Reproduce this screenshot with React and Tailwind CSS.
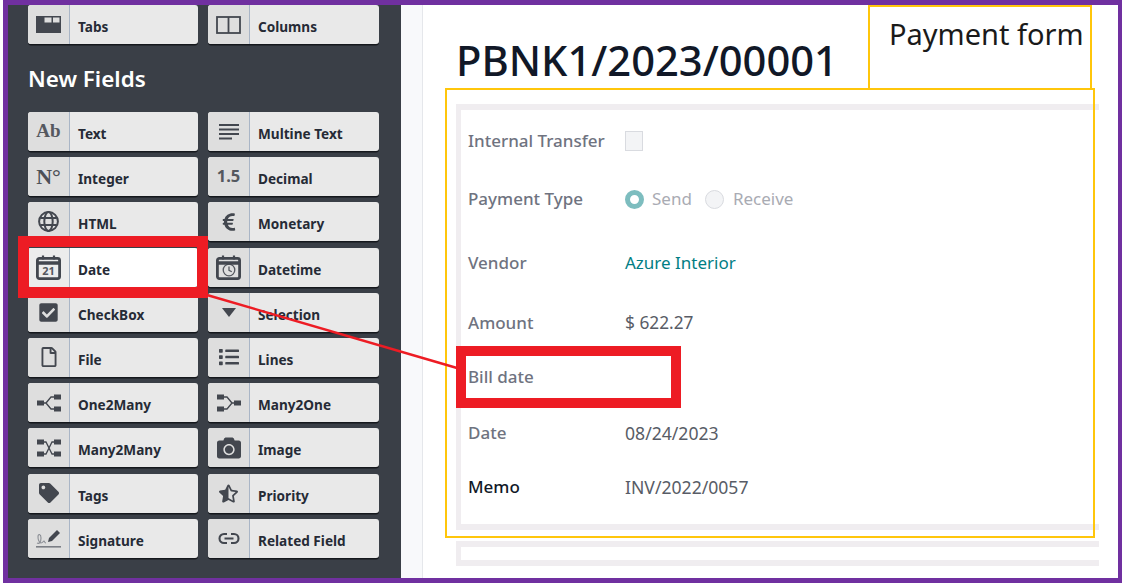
import { FaCamera, FaCheckSquare, FaEuroSign, FaList, FaRegFile, FaStarHalfAlt, FaTag } from 'react-icons/fa'

const ink = '#43474f'

const Tabs = () => (
  <svg width="25" height="17" viewBox="0 0 25 17">
    <rect width="25" height="17" fill={ink} />
    <rect x="8.5" y="1.5" width="7" height="5" fill="#dedede" />
    <rect x="17" y="1.5" width="6.5" height="5" fill="#dedede" />
  </svg>
)

const Columns = () => (
  <svg width="25" height="18" viewBox="0 0 25 18" fill="none" stroke={ink} strokeWidth="1.8">
    <rect x="1" y="1" width="23" height="16" />
    <path d="M12.5 1v16" />
  </svg>
)

const Multiline = () => (
  <svg width="20" height="16" viewBox="0 0 20 16" fill={ink}>
    <rect width="20" height="2" />
    <rect y="4.5" width="20" height="2" />
    <rect y="9" width="20" height="2" />
    <rect y="13.5" width="13" height="2" />
  </svg>
)

const Globe = () => (
  <svg width="21" height="21" viewBox="0 0 21 21" fill="none" stroke={ink} strokeWidth="2">
    <circle cx="10.5" cy="10.5" r="9.4" />
    <ellipse cx="10.5" cy="10.5" rx="4.2" ry="9.4" />
    <path d="M2.2 7h16.6M2.2 14h16.6" />
  </svg>
)

const Calendar = ({ children }) => (
  <div className="relative flex h-[25px] w-[25px] items-center justify-center">
    <svg className="absolute inset-0" width="25" height="25" viewBox="0 0 25 25" fill="none">
      <rect x="1.4" y="3.4" width="22.2" height="20.2" rx="2" stroke={ink} strokeWidth="2.8" />
      <path d="M1 8h23" stroke={ink} strokeWidth="3.4" />
      <path d="M7 0.5v4M18 0.5v4" stroke={ink} strokeWidth="2.2" />
    </svg>
    {children}
  </div>
)

const Clock = () => (
  <svg className="mt-[6px]" width="14" height="14" viewBox="0 0 15 15" fill="none" stroke="#55585f" strokeWidth="1.4">
    <circle cx="7.5" cy="7.5" r="6.2" />
    <path d="M7.5 3.8v4l3 1.6" />
  </svg>
)

const Caret = () => (
  <svg width="14" height="9" viewBox="0 0 14 9" fill={ink}>
    <path d="M0 0h14L7 9z" />
  </svg>
)

const One2Many = () => (
  <svg width="24" height="18" viewBox="0 0 24 18">
    <path d="M6 9h3l5-6h3M9 9l5 6h3" fill="none" stroke={ink} strokeWidth="1.3" />
    <g fill={ink}>
      <rect y="6.5" width="7" height="5" />
      <rect x="17" y="0.5" width="7" height="5" />
      <rect x="17" y="12.5" width="7" height="5" />
    </g>
  </svg>
)

const Many2One = () => (
  <svg width="24" height="18" viewBox="0 0 24 18">
    <path d="M18 9h-3l-5-6H7M15 9l-5 6H7" fill="none" stroke={ink} strokeWidth="1.3" />
    <g fill={ink}>
      <rect x="17" y="6.5" width="7" height="5" />
      <rect y="0.5" width="7" height="5" />
      <rect y="12.5" width="7" height="5" />
    </g>
  </svg>
)

const Many2Many = () => (
  <svg width="24" height="18" viewBox="0 0 24 18">
    <path d="M6 3h3l6 12h3M6 15h3l6-12h3" fill="none" stroke={ink} strokeWidth="1.3" />
    <g fill={ink}>
      <rect y="0.5" width="7" height="5" />
      <rect y="12.5" width="7" height="5" />
      <rect x="17" y="0.5" width="7" height="5" />
      <rect x="17" y="12.5" width="7" height="5" />
    </g>
  </svg>
)

const Signature = () => (
  <svg width="25" height="19" viewBox="0 0 25 19" fill="none">
    <path d="M1 14c2 1 4 0 4-5 0-4-3-5-3-1 0 3 1 5 3 6 2 0 2-2 3-2s0 2 2 2" stroke="#8b8e95" strokeWidth="1.1" />
    <path d="M12 13l1-4 8-8 3 3-8 8z" fill={ink} />
    <rect y="17" width="25" height="1.6" fill="#7b7e85" />
  </svg>
)

const Link = () => (
  <svg width="22" height="13" viewBox="0 0 22 13" fill="none" stroke={ink} strokeWidth="2.1">
    <path d="M9 2H6a4.5 4.5 0 0 0 0 9h3M13 2h3a4.5 4.5 0 0 1 0 9h-3M6.5 6.5h9" />
  </svg>
)

const fields = [
  ['Text', <span className='font-["Liberation_Serif",serif] text-[19px] font-bold text-[#55585f]'>Ab</span>],
  ['Multine Text', <Multiline />],
  ['Integer', <span className='font-["Liberation_Serif",serif] text-[22px] font-bold text-[#4d5057]'>N°</span>],
  ['Decimal', <span className='font-["Noto_Sans",sans-serif] text-[16.5px] font-bold text-[#55585f]'>1.5</span>],
  ['HTML', <Globe />],
  ['Monetary', <FaEuroSign size={20} color={ink} />],
  ['Date', <Calendar><span className='mt-[6px] font-["Noto_Sans",sans-serif] text-[11px] font-bold leading-none text-[#55585f]'>21</span></Calendar>],
  ['Datetime', <Calendar><Clock /></Calendar>],
  ['CheckBox', <FaCheckSquare size={21} color={ink} />],
  ['Selection', <Caret />],
  ['File', <FaRegFile size={20} color={ink} />],
  ['Lines', <FaList size={20} color={ink} />],
  ['One2Many', <One2Many />],
  ['Many2One', <Many2One />],
  ['Many2Many', <Many2Many />],
  ['Image', <FaCamera size={24} color={ink} />],
  ['Tags', <FaTag size={20} color={ink} />],
  ['Priority', <FaStarHalfAlt size={19} color={ink} />],
  ['Signature', <Signature />],
  ['Related Field', <Link />],
]

function FieldButton({ label, icon, active }) {
  return (
    <div className={`flex h-[39px] overflow-hidden rounded-[3px] shadow-[0_1.5px_0_#15181d] ${active ? 'bg-white' : 'bg-[#e9e9e9]'}`}>
      <div className={`flex w-[42px] shrink-0 items-center justify-center border-r border-[#a9b5c6] ${active ? 'bg-[#ececec]' : 'bg-[#dedede]'}`}>
        {icon}
      </div>
      <span className="pl-[8px] pt-[12px] text-[13.6px] font-bold leading-[20px] text-[#262b36]">{label}</span>
    </div>
  )
}

const rows = [
  { label: 'Internal Transfer', height: 'h-[60px]', value: <div className="h-[20px] w-[18px] border border-[#d9dbe0] bg-[#f3f4f6]" /> },
  {
    label: 'Payment Type',
    height: 'h-[56px]',
    value: (
      <div className="flex items-center text-[#a9abb3]">
        <span className="h-[19px] w-[19px] rounded-full border-[5px] border-[#7dbdbf] bg-white" />
        <span className="ml-[8px]">Send</span>
        <span className="ml-[13px] h-[19px] w-[19px] rounded-full border border-[#d9dbe0] bg-[#f3f4f6]" />
        <span className="ml-[9px]">Receive</span>
      </div>
    ),
  },
  { label: 'Vendor', height: 'h-[72px]', value: <span className="text-[#017e84]">Azure Interior</span> },
  { label: 'Amount', height: 'h-[48px]', value: <span className="text-[17.3px] text-[#585c66]">$ 622.27</span> },
  { label: 'Bill date', height: 'h-[60px]', value: null },
  { label: 'Date', height: 'h-[52px]', value: <span className="text-[17.6px] text-[#585c66]">08/24/2023</span> },
  { label: 'Memo', height: 'h-[56px]', value: <span className="text-[17.6px] text-[#585c66]">INV/2022/0057</span>, strong: true },
]

export default function App() {
  return (
    <div className='relative h-[583px] w-[1122px] overflow-hidden bg-white pl-[3px] font-["Noto_Sans",sans-serif]'>
      <div className="flex h-full border-y-[5px] border-l-[5px] border-r-[4px] border-[#7030a0]">
        <aside className="w-[393px] shrink-0 bg-[#3a3f47] pl-[20px]">
          <div className="grid w-[351px] grid-cols-[170px_171px] gap-x-[10px]">
            <FieldButton label="Tabs" icon={<Tabs />} />
            <FieldButton label="Columns" icon={<Columns />} />
          </div>
          <h2 className="mb-[17px] mt-[19px] h-[32px] text-[22.4px] font-semibold leading-[32px] text-white">New Fields</h2>
          <div className="grid w-[351px] grid-cols-[170px_171px] gap-x-[10px] gap-y-[6.2px]">
            {fields.map(([label, icon]) => (
              <FieldButton key={label} label={label} icon={icon} active={label === 'Date'} />
            ))}
          </div>
        </aside>

        <div className="w-[22px] shrink-0 border-r border-[#e5e7eb] bg-[#f8f9fb]" />

        <main className="min-w-0 flex-1 pl-[33px]">
          <div className="flex h-[99px]">
            <h1 className="mt-[30px] h-[50px] w-[433px] shrink-0 whitespace-nowrap text-[41.7px] font-medium leading-[50px] text-[#111827]">PBNK1/2023/00001</h1>
            <div className="mt-[9px] whitespace-nowrap text-[29px] leading-[40px] text-[#1a1a1a]">Payment form</div>
          </div>

          <section className="h-[426px] w-[643px] border-y-[6px] border-l-[5px] border-[#f0edf0] pl-[7px] pt-[1px] text-[17px] leading-[24px]">
            {rows.map((row) => (
              <div key={row.label} className={`flex items-center ${row.height}`}>
                <div className={`w-[157px] shrink-0 font-medium ${row.strong ? 'text-[#111827]' : 'text-[#6f7380]'}`}>{row.label}</div>
                {row.value}
              </div>
            ))}
          </section>

          <div className="mt-[11px] h-[25px] w-[643px] border-y-[6px] border-l-[5px] border-[#f0edf0]" />
        </main>
      </div>

      {/* annotations drawn over the screenshot */}
      <div className="absolute left-[868px] top-[5px] h-[85px] w-[224px] border-2 border-[#ffc60b]" />
      <div className="absolute left-[445px] top-[88px] h-[450px] w-[650px] border-2 border-[#ffc60b]" />
      <div className="absolute left-[18px] top-[236px] h-[62px] w-[190px] border-[11px] border-[#ed1c24]" />
      <div className="absolute left-[456px] top-[346px] h-[62px] w-[225px] border-[10px] border-[#ed1c24]" />
      <svg className="absolute left-0 top-0" width="1122" height="583" fill="none">
        <path d="M207 295L457 368" stroke="#ed1c24" strokeWidth="2.4" />
      </svg>
    </div>
  )
}
